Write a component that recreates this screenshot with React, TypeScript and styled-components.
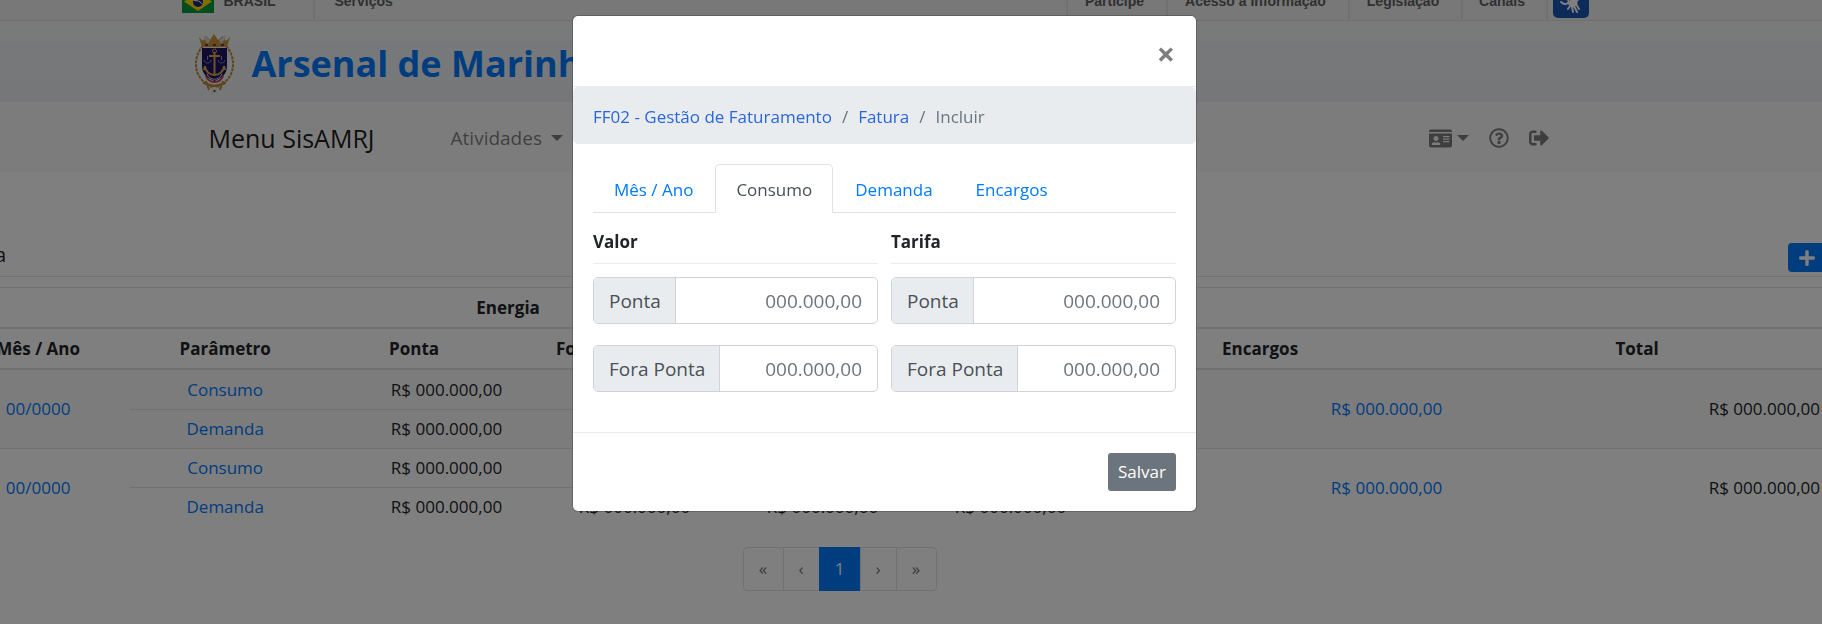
import React from "react";
import styled, { createGlobalStyle, css } from "styled-components";
import { FaIdCard, FaRegQuestionCircle, FaSignOutAlt, FaPlus } from "react-icons/fa";

const Global = createGlobalStyle`
  *, *::before, *::after { box-sizing: border-box; }
  body {
    margin: 0;
    background: #fff;
    color: #212529;
    font: 17px/26px "Open Sans", "Noto Sans", sans-serif;
    overflow: hidden;
  }
  a { color: #007bff; text-decoration: none; }
  button, input { font: inherit; }
`;

const Page = styled.div`
  margin-left: -53px;
  min-height: 100vh;
  overflow: hidden;
`;

const Container = styled.div<{ $inset: number }>`
  display: flex;
  align-items: center;
  max-width: 1408px;
  margin: 0 auto;
  padding: 0 ${(p) => p.$inset}px;
`;

const BrasilBar = styled.div`
  height: 21px;
  background: #f1f1f1;
  border-bottom: 1px solid #dfdfdf;
  font: bold 14px/20px "Liberation Sans", Arial, sans-serif;
  color: #606060;
  overflow: hidden;

  a { color: inherit; }
`;

const BrasilRow = styled(Container)`
  height: 20px;
  align-items: stretch;
  padding-left: 1px;
`;

const Country = styled.a`
  display: flex;
  align-items: flex-start;
  gap: 10px;
  width: 133px;
  border-right: 2px solid #e3e3e3;

  svg { margin-top: -9px; }
`;

const BarLabel = styled.span`
  margin-top: -9px;
`;

const Services = styled.a`
  margin: -9px auto 0 20px;
`;

const BarLinks = styled.nav`
  display: grid;
  grid-template-columns: 100px 182px 113px 85px;
  border-right: 2px solid #e3e3e3;
  text-align: center;

  a { padding-right: 4px; border-left: 2px solid #e3e3e3; }
  span { display: block; }
`;

const Libras = styled.a`
  display: flex;
  justify-content: center;
  align-items: flex-end;
  width: 36px;
  height: 34px;
  margin: -16px 0 0 5px;
  padding-bottom: 4px;
  border-radius: 5px;
  background: #1b56b0;
`;

const Banner = styled.header`
  height: 81px;
  background: linear-gradient(#f1f6f4 0 20px, #eff0f3 20px 60px, #ecedf1);
`;

const Brand = styled(Container)`
  height: 81px;
  gap: 18px;
  padding-top: 5px;
`;

const SiteTitle = styled.h1`
  margin: 0;
  font-size: 36px;
  line-height: 48px;
  font-weight: 700;
  color: #007bff;
  white-space: nowrap;
`;

const Navbar = styled.div`
  height: 70px;
  background: #f8f8f8;
`;

const NavRow = styled(Container)`
  height: 70px;
  padding-top: 2px;
  padding-right: 40px;
`;

const MenuTitle = styled.a`
  margin-right: 76px;
  font-size: 25px;
  && { color: rgba(0, 0, 0, 0.9); }
`;

const NavButton = styled.button`
  display: flex;
  align-items: center;
  gap: 9px;
  padding: 0;
  border: 0;
  background: none;
  color: rgba(0, 0, 0, 0.5);
  font-size: 19px;

  &::after {
    content: "";
    border: 6px solid transparent;
    border-top-color: currentColor;
    border-bottom: 0;
  }
`;

const Tools = styled.div`
  display: flex;
  align-items: center;
  gap: 20px;
  margin-left: auto;

  a { display: flex; color: rgba(0, 0, 0, 0.5); }
  ${NavButton} { gap: 5px; }
`;

const Content = styled.main`
  margin: 0 -4px 0 -1px;
  padding-top: 62px;
`;

const TitleRow = styled.div`
  display: flex;
  align-items: center;
  height: 43px;
  border-bottom: 1px solid #e5e5e5;

  h2 { margin: 0 auto 0 0; font-size: 20px; font-weight: 400; }
`;

const AddButton = styled.button`
  display: flex;
  align-items: center;
  justify-content: center;
  align-self: flex-end;
  width: 38px;
  height: 29px;
  margin-bottom: 4px;
  border: 0;
  border-radius: 4px;
  background: #007bff;
  color: #fff;
`;

const Table = styled.table`
  width: 100%;
  margin-top: 10px;
  border-collapse: separate;
  border-spacing: 0;
  table-layout: fixed;
`;

const Head = styled.th`
  height: 41px;
  padding: 0;
  border-bottom: 2px solid #dee2e6;
  text-align: center;
  font-weight: 700;
  white-space: nowrap;
`;

const GroupHead = styled(Head)`
  height: 42px;
  border-top: 1px solid #dee2e6;
`;

const Cell = styled.td<{ $align?: "right"; $line?: boolean }>`
  height: 39px;
  padding: 0 6px;
  text-align: ${(p) => p.$align ?? "center"};
  ${(p) => p.$line && css`border-top: 1px solid #dee2e6;`}
`;

const Group = styled.tbody<{ $striped: boolean }>`
  background: ${(p) => (p.$striped ? "#f8f8f8" : "#fff")};
`;

const Pager = styled.nav`
  display: flex;
  justify-content: center;
  margin-top: 21px;
  padding-right: 92px;
`;

const PageLink = styled.a<{ $active?: boolean; $wide?: boolean }>`
  display: flex;
  align-items: center;
  justify-content: center;
  width: ${(p) => (p.$wide ? 41 : 37)}px;
  height: 44px;
  margin-left: -1px;
  border: 1px solid #dee2e6;
  && { color: #6c757d; }

  &:first-child { border-radius: 4px 0 0 4px; }
  &:last-child { border-radius: 0 4px 4px 0; }
  ${(p) =>
    p.$active &&
    css`
      && { width: 42px; border-color: #007bff; background: #007bff; color: #fff; }
    `}
`;

const Backdrop = styled.div`
  position: fixed;
  inset: 0 0 0 -53px;
  display: flex;
  justify-content: center;
  align-items: flex-start;
  padding-top: 16px;
  background: rgba(0, 0, 0, 0.5);
`;

const Dialog = styled.section`
  width: 623px;
  border-radius: 5px;
  background: #fff;
  box-shadow: 0 0 0 1px rgba(0, 0, 0, 0.2);
`;

const DialogHeader = styled.div`
  display: flex;
  justify-content: flex-end;
  align-items: center;
  height: 71px;
  padding: 5px 21px 0;
  border-bottom: 1px solid #e9ecef;
`;

const Close = styled.button`
  padding: 0;
  border: 0;
  background: none;
  color: #7f7f7f;
  font-size: 32px;
  font-weight: 700;
  line-height: 32px;
`;

const Breadcrumb = styled.nav`
  display: flex;
  gap: 10px;
  padding: 17px 20px 14px;
  border-radius: 5px;
  background: #e9ecef;
  color: #6c757d;

  a { color: #2a66d9; }
`;

const DialogBody = styled.div`
  padding: 20px 20px 40px;
`;

const Tabs = styled.div`
  display: flex;
  gap: 1px;
  height: 49px;
  border-bottom: 1px solid #dee2e6;
`;

const Tab = styled.button<{ $active?: boolean }>`
  height: 49px;
  padding: 2px 20px 0;
  border: 1px solid transparent;
  border-radius: 5px 5px 0 0;
  background: none;
  color: #007bff;
  ${(p) =>
    p.$active &&
    css`
      border-color: #dee2e6 #dee2e6 #fff;
      background: #fff;
      color: #495057;
    `}
`;

const Columns = styled.div`
  display: grid;
  grid-template-columns: 1fr 1fr;
  gap: 13px;
  padding-top: 16px;
`;

const Fields = styled.fieldset`
  min-width: 0;
  margin: 0;
  padding: 0;
  border: 0;
`;

const Legend = styled.legend`
  width: 100%;
  margin-bottom: 13px;
  padding: 0 0 8px;
  border-bottom: 1px solid #ececec;
  font-weight: 700;
`;

const Field = styled.label`
  display: flex;
  height: 47px;
  border: 1px solid #ced4da;
  border-radius: 5px;
  overflow: hidden;
  font-size: 19px;

  & + & { margin-top: 21px; }

  span {
    display: flex;
    align-items: center;
    flex: none;
    padding: 0 14px 0 15px;
    border-right: 1px solid #ced4da;
    background: #e9ecef;
    color: #495057;
  }

  input {
    flex: 1;
    min-width: 0;
    padding: 0 15px;
    border: 0;
    background: none;
    text-align: right;
  }

  input::placeholder { color: #6c757d; opacity: 1; }
`;

const DialogFooter = styled.div`
  display: flex;
  justify-content: flex-end;
  padding: 20px;
  border-top: 1px solid #e9ecef;
`;

const Save = styled.button`
  height: 38px;
  padding: 0 10px;
  border: 0;
  border-radius: 3px;
  background: #6c757d;
  color: #fff;
`;

const Flag = () => (
  <svg width="32" height="22" viewBox="0 0 32 22" aria-hidden="true">
    <rect width="32" height="22" fill="#009b3a" />
    <path d="M16 1 30 10.500 16 20 2 10.500Z" fill="#fedf00" />
    <circle cx="16" cy="11" r="5" fill="#20207e" />
    <path d="M11.500 9.500Q17 8.500 20.600 13" stroke="#fff" fill="none" />
  </svg>
);

const Hands = () => (
  <svg width="24" height="24" viewBox="0 0 24 24" fill="none" stroke="#fff" strokeLinecap="round" aria-hidden="true">
    <path d="M12 10c3-3 7 0 6 4l-3 3-4-1-2-3Z" fill="#fff" />
    <path d="M11 16l-2 3M13 17l1 5M15 16l3 6M17 14l3 5M17 11l3-2" strokeWidth="2" />
    <path d="M11 6C8 5 5 7 8 9s2 5-2 5c-2 0-3-1-4-2M6 5 3 2M5 8H1" strokeWidth="2" />
  </svg>
);

const Crest = () => (
  <svg width="39" height="62" viewBox="0 0 39 62" fill="none" aria-hidden="true">
    <path d="M8 13C1 20-1 32 3 41c3 6 7 9 12 12M31 13c7 7 9 19 5 28-3 6-7 9-12 12" stroke="#b98a35" strokeWidth="2" strokeDasharray="3 1" />
    <path d="M4 4 8 8 11 3 15 7 19 1 23 7 28 3 31 8 35 4 32 14H7Z" fill="#c9963a" />
    <path d="M8 2 15 7 13 11 9 6ZM31 2 24 7 26 11 30 6Z" fill="#d4d4e0" />
    <path d="M10 12h3M18 12h3M26 12h3" stroke="#8c2f3f" strokeWidth="2" />
    <path d="M7 15h25v18c0 8-5 12-12.500 15C12 45 7 41 7 33Z" fill="#1c1464" />
    <path d="M11 43c3 8 14 8 17 0" stroke="#c23a5a" strokeWidth="2" />
    <path d="M12 41c3 7 12 7 15 0" stroke="#d8d8ee" />
    <path d="M19.500 19v23M14 23h11M10 33c1 12 18 12 19 0M10 33l-1 4M29 33l1 4" stroke="#d8a850" strokeWidth="2" />
    <circle cx="19.500" cy="18" r="2" stroke="#d8a850" />
    <path d="M9 27c1 4 6 4 7 0M23 27c1 4 6 4 7 0M12.500 23v4M26.500 23v4" stroke="#8f92b8" />
    <path d="M8 50 24 54M31 50 15 54M11 48l3 9M28 48l-3 9" stroke="#b98a35" strokeWidth="2" />
    <path d="M16 55l7 6M23 55l-7 6" stroke="#e8e2d0" strokeWidth="2" />
    <circle cx="19.500" cy="58" r="1" fill="#222" />
  </svg>
);

const barLinks = ["Participe", "Acesso à Informação", "Legislação", "Canais"];
const tabs = ["Mês / Ano", "Consumo", "Demanda", "Encargos"];
const columnHeads = ["Mês / Ano", "Parâmetro", "Ponta", "Fora Ponta", "", "", "Encargos", "Total"];
const columnWidths = ["9.800%", "10.100%", "10%", "10%", "10%", "10%", "20%", "20.100%"];
const amount = "R$ 000.000,00";

const Amounts = ({ line }: { line?: boolean }) => (
  <>
    {[0, 1, 2, 3].map((i) => (
      <Cell key={i} $align="right" $line={line}>{amount}</Cell>
    ))}
  </>
);

const Invoice = ({ index }: { index: number }) => (
  <Group $striped={index === 0}>
    <tr>
      <Cell rowSpan={2} $line={index > 0}><a href="#fatura">00/0000</a></Cell>
      <Cell $line={index > 0}><a href="#consumo">Consumo</a></Cell>
      <Amounts line={index > 0} />
      <Cell rowSpan={2} $align="right" $line={index > 0}><a href="#encargos">{amount}</a></Cell>
      <Cell rowSpan={2} $align="right" $line={index > 0}>{amount}</Cell>
    </tr>
    <tr>
      <Cell $line><a href="#demanda">Demanda</a></Cell>
      <Amounts line />
    </tr>
  </Group>
);

export default function App() {
  return (
    <>
      <Global />
      <Page>
        <BrasilBar>
          <BrasilRow $inset={0}>
            <Country href="#brasil"><Flag /><BarLabel>BRASIL</BarLabel></Country>
            <Services href="#servicos">Serviços</Services>
            <BarLinks>
              {barLinks.map((t) => (
                <a href="#barra" key={t}><BarLabel>{t}</BarLabel></a>
              ))}
            </BarLinks>
            <Libras href="#libras" aria-label="Libras"><Hands /></Libras>
          </BrasilRow>
        </BrasilBar>
        <Banner>
          <Brand $inset={14}>
            <Crest />
            <SiteTitle>Arsenal de Marinha</SiteTitle>
          </Brand>
        </Banner>
        <Navbar>
          <NavRow $inset={28}>
            <MenuTitle href="#menu">Menu SisAMRJ</MenuTitle>
            <NavButton type="button">Atividades</NavButton>
            <Tools>
              <NavButton type="button" aria-label="Conta"><FaIdCard size={23} /></NavButton>
              <a href="#ajuda" aria-label="Ajuda"><FaRegQuestionCircle size={20} /></a>
              <a href="#sair" aria-label="Sair"><FaSignOutAlt size={20} /></a>
            </Tools>
          </NavRow>
        </Navbar>
        <Content>
          <TitleRow>
            <h2>Fatura</h2>
            <AddButton type="button" aria-label="Adicionar"><FaPlus size={18} /></AddButton>
          </TitleRow>
          <Table>
            <colgroup>
              {columnWidths.map((width, i) => <col key={i} style={{ width }} />)}
            </colgroup>
            <thead>
              <tr>
                <GroupHead colSpan={2} />
                <GroupHead colSpan={2}>Energia</GroupHead>
                <GroupHead colSpan={2} />
                <GroupHead colSpan={2} />
              </tr>
              <tr>
                {columnHeads.map((t, i) => <Head key={i}>{t}</Head>)}
              </tr>
            </thead>
            <Invoice index={0} />
            <Invoice index={1} />
          </Table>
          <Pager aria-label="Paginação">
            <PageLink href="#primeira" $wide>«</PageLink>
            <PageLink href="#anterior">‹</PageLink>
            <PageLink href="#1" $active>1</PageLink>
            <PageLink href="#proxima">›</PageLink>
            <PageLink href="#ultima" $wide>»</PageLink>
          </Pager>
        </Content>
      </Page>
      <Backdrop>
        <Dialog role="dialog" aria-label="Incluir">
          <DialogHeader><Close type="button" aria-label="Fechar">×</Close></DialogHeader>
          <Breadcrumb>
            <a href="#ff02">FF02 - Gestão de Faturamento</a>
            <span>/</span>
            <a href="#fatura">Fatura</a>
            <span>/</span>
            <span>Incluir</span>
          </Breadcrumb>
          <DialogBody>
            <Tabs role="tablist">
              {tabs.map((t) => (
                <Tab key={t} type="button" role="tab" aria-selected={t === "Consumo"} $active={t === "Consumo"}>{t}</Tab>
              ))}
            </Tabs>
            <Columns>
              {["Valor", "Tarifa"].map((name) => (
                <Fields key={name}>
                  <Legend>{name}</Legend>
                  <Field><span>Ponta</span><input placeholder="000.000,00" /></Field>
                  <Field><span>Fora Ponta</span><input placeholder="000.000,00" /></Field>
                </Fields>
              ))}
            </Columns>
          </DialogBody>
          <DialogFooter><Save type="button">Salvar</Save></DialogFooter>
        </Dialog>
      </Backdrop>
    </>
  );
}
